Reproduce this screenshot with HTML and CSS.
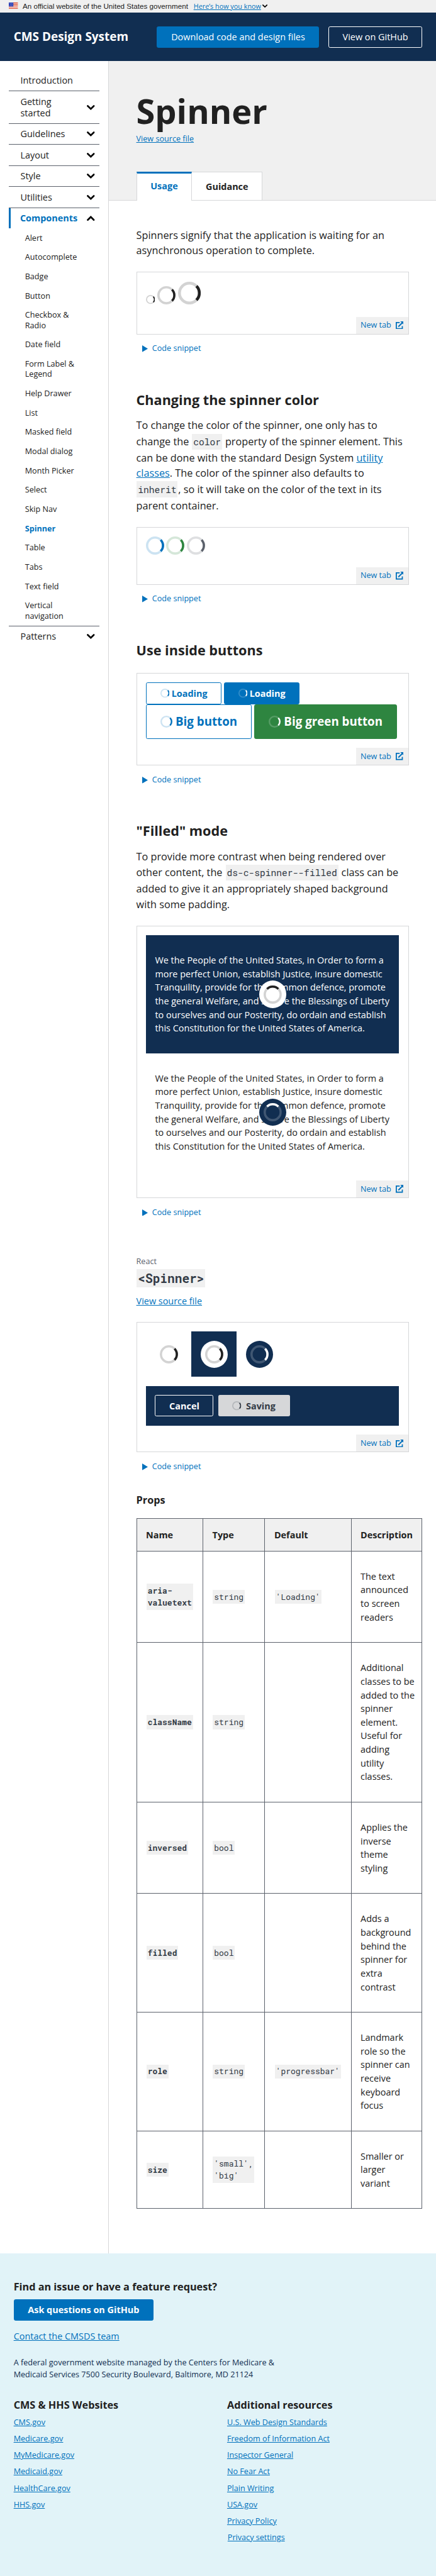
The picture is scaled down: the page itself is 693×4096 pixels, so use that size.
FILE: index.html
```html
<!DOCTYPE html>
<html lang="en">
<head>
<meta charset="utf-8">
<title>Spinner - CMS Design System</title>
<link rel="stylesheet" href="styles.css">
</head>
<body>
<svg class="sprite" width="0" height="0" aria-hidden="true">
  <symbol id="spinner" viewBox="0 0 32 32">
    <circle cx="16" cy="16" r="14" fill="none" stroke="currentColor" stroke-width="4" opacity=".2"/>
    <path d="M25.9 6.1A14 14 0 0 1 25.9 25.9" fill="none" stroke="currentColor" stroke-width="4"/>
  </symbol>
  <symbol id="chevron" viewBox="0 0 14 9">
    <path d="M1.6 1.6 7 6.8l5.4-5.2" fill="none" stroke="#000" stroke-width="3" stroke-linecap="round"/>
  </symbol>
  <symbol id="external" viewBox="0 0 14 14">
    <path d="M7 2H1v11h10.600V8.200" fill="none" stroke="currentColor" stroke-width="2"/>
    <path d="M4.600 9.400 11.500 2.500" stroke="currentColor" stroke-width="2.200"/>
    <path d="M8 0h6v6z" fill="currentColor"/>
  </symbol>
  <symbol id="play" viewBox="0 0 10 12"><path d="M0 0 10 6 0 12z" fill="currentColor"/></symbol>
</svg>
<div class="page">
  <div class="usa-banner">
    <svg class="flag" viewBox="0 0 16 11"><path fill="#fff" d="M0 0h16v11H0z"/><path fill="#db3e1f" d="M0 0h16v1H0zM0 2h16v1H0zM0 4h16v1H0zM0 6h16v1H0zM0 8h16v1H0zM0 10h16v1H0z"/><path fill="#1e33b1" d="M0 0h8v7H0z"/><path stroke="#fff" stroke-width=".8" stroke-dasharray=".8 1.2" d="M1 1.500h6.500M2 3.500h5.500M1 5.500h6.500"/></svg>
    <span class="banner-text">An official website of the United States government</span>
    <a class="banner-link">Here’s how you know</a>
    <svg class="banner-chevron"><use href="#chevron"/></svg>
  </div>
  <header class="header">
    <div class="brand">CMS Design System</div>
    <a class="btn btn-primary btn-light">Download code and design files</a>
    <a class="btn btn-inverse btn-light">View on GitHub</a>
  </header>
  <div class="columns">
    <nav class="nav">
      <div class="nav-item"><span>Introduction</span></div>
      <div class="nav-item"><span>Getting started</span><svg class="chev"><use href="#chevron"/></svg></div>
      <div class="nav-item"><span>Guidelines</span><svg class="chev"><use href="#chevron"/></svg></div>
      <div class="nav-item"><span>Layout</span><svg class="chev"><use href="#chevron"/></svg></div>
      <div class="nav-item"><span>Style</span><svg class="chev"><use href="#chevron"/></svg></div>
      <div class="nav-item"><span>Utilities</span><svg class="chev"><use href="#chevron"/></svg></div>
      <div class="nav-item nav-open"><span>Components</span><svg class="chev flip"><use href="#chevron"/></svg></div>
      <ul class="subnav">
        <li>Alert</li><li>Autocomplete</li><li>Badge</li><li>Button</li><li>Checkbox &amp; Radio</li><li>Date field</li><li>Form Label &amp; Legend</li><li>Help Drawer</li><li>List</li><li>Masked field</li><li>Modal dialog</li><li>Month Picker</li><li>Select</li><li>Skip Nav</li><li class="current">Spinner</li><li>Table</li><li>Tabs</li><li>Text field</li><li>Vertical navigation</li>
      </ul>
      <div class="nav-item nav-last"><span>Patterns</span><svg class="chev"><use href="#chevron"/></svg></div>
    </nav>
    <main class="main">
      <div class="hero">
        <h1>Spinner</h1>
        <a class="link source-small">View source file</a>
        <div class="tabs">
          <div class="tab tab-active">Usage</div>
          <div class="tab">Guidance</div>
        </div>
      </div>
      <div class="content">
        <p class="lead">Spinners signify that the application is waiting for an asynchronous operation to complete.</p>
        <section class="example">
          <div class="demo">
            <div class="row row-sizes">
              <svg class="spin s16"><use href="#spinner"/></svg>
              <svg class="spin s32"><use href="#spinner"/></svg>
              <svg class="spin s40"><use href="#spinner"/></svg>
            </div>
          </div>
          <a class="newtab">New tab<svg><use href="#external"/></svg></a>
        </section>
        <div class="snippet"><svg><use href="#play"/></svg>Code snippet</div>

        <h2>Changing the spinner color</h2>
        <p>To change the color of the spinner, one only has to change the <code>color</code> property of the spinner element. This can be done with the standard Design System <a class="link">utility classes</a>. The color of the spinner also defaults to<br><code>inherit</code>, so it will take on the color of the text in its<br>parent container.</p>
        <section class="example">
          <div class="demo">
            <div class="row row-colors">
              <svg class="spin s32 blue"><use href="#spinner"/></svg>
              <svg class="spin s32 green"><use href="#spinner"/></svg>
              <svg class="spin s32 gray"><use href="#spinner"/></svg>
            </div>
          </div>
          <a class="newtab">New tab<svg><use href="#external"/></svg></a>
        </section>
        <div class="snippet"><svg><use href="#play"/></svg>Code snippet</div>

        <h2 class="h2-alone">Use inside buttons</h2>
        <section class="example">
          <div class="demo">
            <div class="row">
              <span class="btn btn-outline"><svg class="spin s16"><use href="#spinner"/></svg>Loading</span>
              <span class="btn btn-primary"><svg class="spin s16"><use href="#spinner"/></svg>Loading</span>
            </div>
            <div class="row row-big">
              <span class="btn btn-outline btn-big"><svg class="spin s21"><use href="#spinner"/></svg>Big button</span>
              <span class="btn btn-success btn-big"><svg class="spin s21"><use href="#spinner"/></svg>Big green button</span>
            </div>
          </div>
          <a class="newtab">New tab<svg><use href="#external"/></svg></a>
        </section>
        <div class="snippet"><svg><use href="#play"/></svg>Code snippet</div>

        <h2>"Filled" mode</h2>
        <p>To provide more contrast when being rendered over other content, the <code>ds-c-spinner--filled</code> class can be added to give it an appropriately shaped background with some padding.</p>
        <section class="example">
          <div class="demo">
            <div class="cover cover-dark">
              We the People of the United States, in Order to form a more perfect Union, establish Justice, insure domestic Tranquility, provide for the common defence, promote the general Welfare, and secure the Blessings of Liberty to ourselves and our Posterity, do ordain and establish this Constitution for the United States of America.
              <span class="filled overlay"><svg class="spin s32 up"><use href="#spinner"/></svg></span>
            </div>
            <div class="cover">
              We the People of the United States, in Order to form a more perfect Union, establish Justice, insure domestic Tranquility, provide for the common defence, promote the general Welfare, and secure the Blessings of Liberty to ourselves and our Posterity, do ordain and establish this Constitution for the United States of America.
              <span class="filled filled-inverse overlay"><svg class="spin s32 up"><use href="#spinner"/></svg></span>
            </div>
          </div>
          <a class="newtab">New tab<svg><use href="#external"/></svg></a>
        </section>
        <div class="snippet"><svg><use href="#play"/></svg>Code snippet</div>

        <div class="kind">React</div>
        <h3 class="component"><code>&lt;Spinner&gt;</code></h3>
        <div class="source"><a class="link">View source file</a></div>
        <section class="example">
          <div class="demo">
            <div class="tiles">
              <div class="tile"><svg class="spin s32"><use href="#spinner"/></svg></div>
              <div class="tile tile-dark"><span class="filled"><svg class="spin s32"><use href="#spinner"/></svg></span></div>
              <div class="tile"><span class="filled filled-inverse"><svg class="spin s32"><use href="#spinner"/></svg></span></div>
            </div>
            <div class="bar">
              <span class="btn btn-inverse">Cancel</span>
              <span class="btn btn-disabled"><svg class="spin s16"><use href="#spinner"/></svg>Saving</span>
            </div>
          </div>
          <a class="newtab">New tab<svg><use href="#external"/></svg></a>
        </section>
        <div class="snippet"><svg><use href="#play"/></svg>Code snippet</div>

        <h4>Props</h4>
        <table class="props">
          <colgroup><col class="c1"><col class="c2"><col class="c3"><col class="c4"></colgroup>
          <thead><tr><th>Name</th><th>Type</th><th>Default</th><th>Description</th></tr></thead>
          <tbody>
            <tr><td><code class="name">aria-<br>valuetext</code></td><td><code>string</code></td><td><code>'Loading'</code></td><td><p>The text announced to screen readers</p></td></tr>
            <tr><td><code class="name">className</code></td><td><code>string</code></td><td></td><td><p>Additional classes to be added to the spinner element. Useful for adding utility classes.</p></td></tr>
            <tr><td><code class="name">inversed</code></td><td><code>bool</code></td><td></td><td><p>Applies the inverse<br>theme<br>styling</p></td></tr>
            <tr><td><code class="name">filled</code></td><td><code>bool</code></td><td></td><td><p>Adds a background behind the spinner for extra contrast</p></td></tr>
            <tr><td><code class="name">role</code></td><td><code>string</code></td><td><code>'progressbar'</code></td><td><p>Landmark role so the spinner can receive keyboard focus</p></td></tr>
            <tr><td><code class="name">size</code></td><td><code>'small',<br>'big'</code></td><td></td><td><p>Smaller or larger variant</p></td></tr>
          </tbody>
        </table>
      </div>
    </main>
  </div>
  <footer class="footer">
    <h4>Find an issue or have a feature request?</h4>
    <a class="btn btn-primary">Ask questions on GitHub</a>
    <div class="contact"><a class="link">Contact the CMSDS team</a></div>
    <p class="address">A federal government website managed by the Centers for Medicare &amp;<br>Medicaid Services 7500 Security Boulevard, Baltimore, MD 21124</p>
    <div class="footer-cols">
      <div>
        <h4>CMS &amp; HHS Websites</h4>
        <ul>
          <li><a class="link">CMS.gov</a></li><li><a class="link">Medicare.gov</a></li><li><a class="link">MyMedicare.gov</a></li><li><a class="link">Medicaid.gov</a></li><li><a class="link">HealthCare.gov</a></li><li><a class="link">HHS.gov</a></li>
        </ul>
      </div>
      <div>
        <h4>Additional resources</h4>
        <ul>
          <li><a class="link">U.S. Web Design Standards</a></li><li><a class="link">Freedom of Information Act</a></li><li><a class="link">Inspector General</a></li><li><a class="link">No Fear Act</a></li><li><a class="link">Plain Writing</a></li><li><a class="link">USA.gov</a></li><li><a class="link">Privacy Policy</a></li><li class="settings"><a class="link">Privacy settings</a></li>
        </ul>
      </div>
    </div>
  </footer>
</div>
</body>
</html>
```
FILE: styles.css
```css
* { box-sizing: border-box; }
body { margin: 0; background: #fff; }
.sprite { display: block; position: absolute; }
.page {
  zoom: 0.90234375;
  width: 768px;
  height: 4539px;
  font: 16px/24px "Open Sans", sans-serif;
  color: #212121;
  overflow: hidden;
}
h1, h2, h3, h4, p, ul { margin: 0; padding: 0; }
ul { list-style: none; }
svg { display: block; flex: none; }
.link { color: #0071bc; text-decoration: underline; }

/* Government banner */
.usa-banner {
  display: flex; align-items: center;
  height: 22px; padding: 0 16px;
  background: #f0f0f0;
  font-size: 12px; line-height: 22px;
}
.flag { width: 16px; height: 11px; margin: -3px 8px 0 0; }
.banner-text { width: 301px; font-family: "Liberation Sans", sans-serif; font-size: 12.900px; white-space: nowrap; }
.banner-link { color: #0071bc; text-decoration: underline; white-space: nowrap; }
.banner-chevron { width: 9px; height: 6px; margin-left: 2px; }

/* Site header */
.header {
  display: flex; align-items: center;
  height: 86px; padding: 0 24px;
  background: #112e51; color: #fff;
}
.brand { flex: 1; font-size: 21px; font-weight: 700; }
.header .btn + .btn { margin-left: 16px; }

.btn {
  display: inline-flex; align-items: center; justify-content: center;
  height: 38px; padding: 0 24px;
  border: 1px solid transparent; border-radius: 3px;
  font-size: 16px; font-weight: 700; line-height: 24px; white-space: nowrap;
}
.btn .spin { margin-right: 4px; }
.btn-light { font-weight: 400; }
.btn-primary { background: #0071bc; border-color: #0071bc; color: #fff; }
.btn-outline { background: #fff; border-color: #0071bc; color: #0071bc; }
.btn-inverse { border-color: #fff; color: #fff; }
.btn-success { background: #2e8540; border-color: #2e8540; color: #fff; }
.btn-disabled { background: #d6d7d9; color: #323a45; }
.btn-disabled .spin { margin-right: 8px; }
.btn-big { height: 61px; font-size: 20.800px; }
.btn-big .spin { margin-right: 6px; }

/* Side navigation */
.columns { display: flex; height: 3863px; }
.nav { width: 192px; border-right: 1px solid #d6d7d9; padding: 16px 16px 0; }
.nav-item {
  display: flex; align-items: center; justify-content: space-between;
  padding: 8px 8px 8px 20px; line-height: 20px;
  border-bottom: 1px solid #5b616b;
}
.nav-item span { max-width: 105px; }
.nav-item:nth-child(2) span { width: 70px; }
.chev { width: 14px; height: 9px; }
.flip { transform: scaleY(-1); }
.nav-open {
  border-bottom: 0; border-left: 4px solid #0071bc; padding-left: 16px;
  color: #0071bc; font-weight: 700;
}
.nav-last { border-bottom: 0; border-top: 1px solid #5b616b; }
.subnav { font-size: 14px; line-height: 18px; }
.subnav li { padding: 8px 20px 8px 28px; }
.current { color: #0071bc; font-weight: 700; }

/* Hero and tabs */
.main { flex: 1; min-width: 0; }
.hero {
  height: 245px; padding: 48px 48px 0;
  background: #f0f0f0; border-bottom: 1px solid #d6d7d9;
}
h1 { font-size: 60px; line-height: 78px; }
.source-small { display: block; margin-top: 1px; font-size: 14px; line-height: 21px; }
.tabs { display: flex; margin-top: 47px; }
.tab {
  height: 50px; padding: 13px 24px 0;
  background: #fff; border: 1px solid #d6d7d9; border-left: 0;
  font-weight: 700;
}
.tab-active {
  padding-top: 10px; border-top: 4px solid #0071bc; border-left: 1px solid #d6d7d9;
  border-bottom: 0; color: #0071bc;
}

/* Content */
.content { padding: 48px 24px 0 48px; }
.content > p { width: 480px; margin: 16px 0 24px; font-size: 18px; line-height: 27px; }
.content > .lead { margin-top: 0; }
h2 { margin-top: 64px; font-size: 24px; line-height: 31.2px; }
.h2-alone { margin-bottom: 24px; }
code {
  display: inline-block; margin: 1px; padding: 2.400px 2px 1.600px;
  background: #f0f0f0; color: #323a45;
  font-family: "Roboto Mono", "DejaVu Sans Mono", monospace;
  font-size: .9em; line-height: 24px;
}
.example { width: 480px; border: 1px solid #d6d7d9; display: flex; flex-direction: column; }
.demo { padding: 16px; }
.newtab {
  align-self: flex-end; display: flex; align-items: center; justify-content: space-between;
  width: 92px; height: 30px; padding: 0 8px;
  background: #f0f0f0; color: #0071bc; font-size: 14px;
}
.newtab svg { width: 14px; height: 14px; }
.snippet {
  display: flex; align-items: center; gap: 8px;
  padding: 15px 0 0 10px; color: #0071bc; font-size: 14px; line-height: 21px;
}
.snippet svg { width: 10px; height: 12px; }

.row { display: flex; align-items: flex-end; gap: 4px; }
.row-sizes { height: 40px; margin-bottom: 6px; }
.row-colors { margin-bottom: 6px; }
.row-big { gap: 5px; }
.s16 { width: 16px; height: 16px; }
.s21 { width: 21px; height: 21px; }
.s32 { width: 32px; height: 32px; }
.s40 { width: 40px; height: 40px; }
.blue { color: #0071bc; }
.green { color: #2e8540; }
.gray { color: #5b616b; }
.up { transform: rotate(-90deg); }

.cover { position: relative; height: 208px; padding: 32px 0 32px 16px; }
.cover-dark { background: #112e51; color: #fff; }
.filled { display: block; padding: 8px; border-radius: 50%; background: #fff; color: #212121; }
.filled-inverse { background: #112e51; color: #fff; }
.overlay { position: absolute; top: 80px; left: 199px; }

.kind { margin-top: 66px; color: #5b616b; font-size: 14px; line-height: 21px; }
.component { margin-top: 1px; font-size: 24px; display: flex; }
.component code { line-height: 28px; }
.source { margin: 12px 0 24px; }
.tiles { display: flex; margin-bottom: 16px; }
.tile { display: flex; align-items: center; justify-content: center; width: 80px; height: 80px; }
.tile-dark, .bar { background: #112e51; }
.bar { display: flex; gap: 8px; padding: 16px; }

h4 { font-size: 18px; line-height: 23.4px; }
.content h4 { margin: 37px 0 20px; }
.props { width: 504px; border-collapse: collapse; table-layout: fixed; font-size: 16px; }
.c1 { width: 117px; }
.c2 { width: 109px; }
.c3 { width: 152px; }
.props th, .props td { border: 1px solid #5b616b; padding: 16px; text-align: left; vertical-align: middle; }
.props th { background: #f0f0f0; }
.props td p { margin: 16px 0; }
.props td:last-child { padding-right: 12px; }
.props code { display: block; width: fit-content; line-height: 21px; padding: 2px; white-space: nowrap; }
.name { font-weight: 700; }

/* Footer */
.footer { height: 568px; padding: 47px 24px 0; background: #e1f3f8; }
.footer > .btn { margin-top: 10px; }
.contact { margin-top: 16px; }
.address { margin: 24px 0 31px; color: #112e51; font-size: 14px; line-height: 21px; }
.footer-cols { display: grid; grid-template-columns: 376px 1fr; }
.footer-cols ul { margin-top: 9px; font-size: 14px; line-height: 21px; }
.footer-cols li { margin-bottom: 8px; }
.settings { padding-left: 1px; }
```
